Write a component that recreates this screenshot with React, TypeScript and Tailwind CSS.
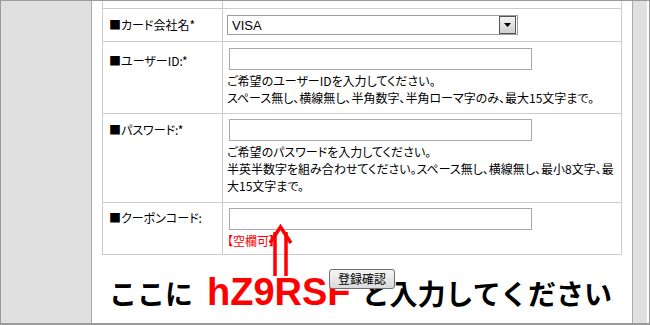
import React from "react";

const rowCls = "flex border-x border-b border-[#cccccc]";
const labelCls = "w-[120px] shrink-0 border-r border-[#cccccc] pl-[6px]";
const inputCls = "block ml-[2px] h-[22px] w-[303px] border border-[#a9a9a9] bg-white";

function HelpLines({ lines, red }: { lines: string[]; red?: boolean }) {
  return (
    <div className={`mt-[2px] leading-[17px] whitespace-nowrap ${red ? "text-[#ff0000]" : ""}`}>
      {lines.map((l, i) => (
        <div key={i}>{l}</div>
      ))}
    </div>
  );
}

export default function App() {
  return (
    <div className="flex h-[325px] w-[650px] overflow-hidden border border-b-2 border-[#9a9a9a] font-['Noto_Sans_CJK_JP',sans-serif] text-[12px] text-black [font-feature-settings:'palt']">
      <div className="w-[91px] shrink-0 bg-[#e0e0e0] border-r border-[#aaaaaa]" />

      <main className="relative w-[540px] shrink-0 bg-white">
        <div className="ml-[10px] w-[520px]">
          {/* 上のはみ出した行 */}
          <div className={`${rowCls} h-[8px]`}>
            <div className={labelCls} />
            <div className="flex-1" />
          </div>

          <div className={`${rowCls} h-[33px]`}>
            <div className={`${labelCls} flex items-center`}>■カード会社名*</div>
            <div className="flex flex-1 items-center pl-[4px]">
              <div className="flex h-[20px] w-[291px] items-center border border-[#9c9c9c] bg-white">
                <span className="flex-1 pl-[4px] font-['Liberation_Sans',Arial,sans-serif] text-[13px] leading-none [font-feature-settings:normal]">
                  VISA
                </span>
                <span className="mr-px flex h-[18px] w-[17px] items-center justify-center border border-[#555555] bg-gradient-to-b from-[#f4f4f4] to-[#cfcfcf]">
                  <svg width="7" height="4" viewBox="0 0 7 4">
                    <path d="M0 0h7L3.5 4z" fill="#000" />
                  </svg>
                </span>
              </div>
            </div>
          </div>

          <div className={`${rowCls} h-[72px]`}>
            <div className={`${labelCls} pt-[10px]`}>■ユーザーID:*</div>
            <div className="flex-1 pl-[4px] pt-[6px]">
              <div className={inputCls} />
              <HelpLines
                lines={[
                  "ご希望のユーザーIDを入力してください。",
                  "スペース無し、横線無し、半角数字、半角ローマ字のみ、最大15文字まで。",
                ]}
              />
            </div>
          </div>

          <div className={`${rowCls} h-[89px]`}>
            <div className={`${labelCls} pt-[7px]`}>■パスワード:*</div>
            <div className="flex-1 pl-[4px] pt-[5px]">
              <div className={inputCls} />
              <HelpLines
                lines={[
                  "ご希望のパスワードを入力してください。",
                  "半英半数字を組み合わせてください。スペース無し、横線無し、最小8文字、最",
                  "大15文字まで。",
                ]}
              />
            </div>
          </div>

          <div className={`${rowCls} h-[52px]`}>
            <div className={`${labelCls} pt-[6px]`}>■クーポンコード:</div>
            <div className="flex-1 pl-[4px] pt-[5px]">
              <div className={inputCls} />
              <HelpLines lines={["【空欄可】"]} red />
            </div>
          </div>
        </div>

        <div className="mt-[14px] flex justify-center">
          <button className="relative z-10 h-[20px] w-[66px] rounded-[3px] border border-[#707070] bg-gradient-to-b from-[#f6f6f6] to-[#dadada] text-[12px] leading-none">
            登録確認
          </button>
        </div>

        {/* 赤い矢印 */}
        <svg
          className="absolute left-[175px] top-[222px]"
          width="30"
          height="54"
          viewBox="0 0 30 54"
          fill="none"
          stroke="#ff0000"
          strokeWidth="3.5"
        >
          <path d="M8 9V53M19 9V53" />
          <path d="M3 20L13.5 4L24 20" strokeLinejoin="miter" />
        </svg>

        {/* 案内文 */}
        <div className="absolute left-[17px] top-[274px] flex items-baseline whitespace-nowrap font-bold text-[28px] leading-[34px] [font-feature-settings:normal]">
          <span>ここに</span>
          <span className="ml-[14px] font-['Liberation_Sans',Arial,sans-serif] text-[38px] text-[#ff0000]">
            hZ9RSF
          </span>
          <span className="ml-[11px]">と入力してください</span>
        </div>
      </main>

      <div className="w-[15px] shrink-0 bg-[#e0e0e0] border-l border-[#aaaaaa]" />
    </div>
  );
}
